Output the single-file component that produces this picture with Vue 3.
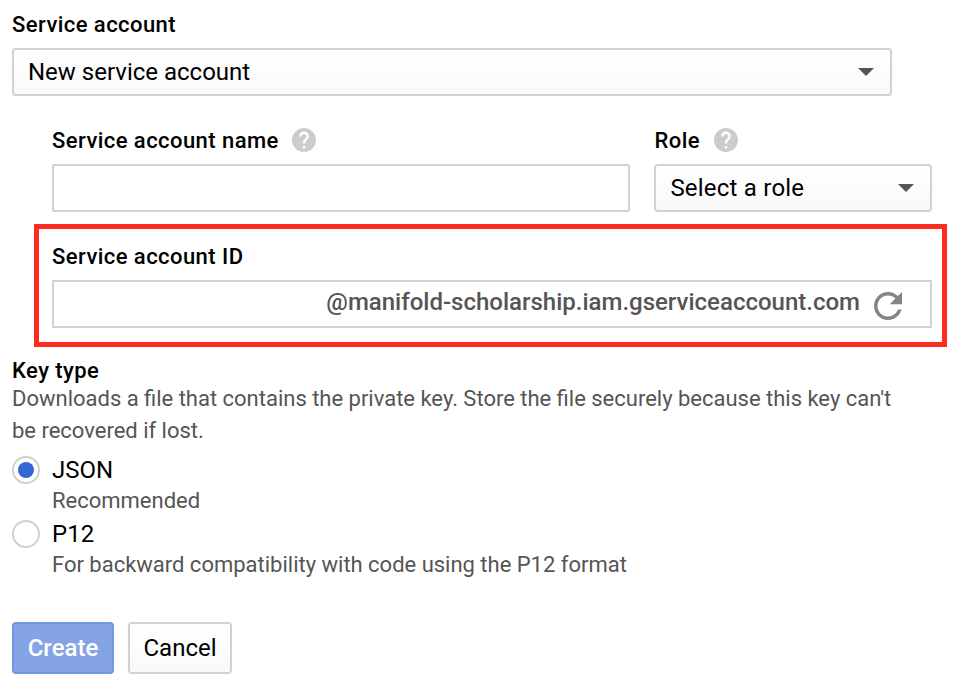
<script setup>
import { ref } from 'vue'

const keyType = ref('json')
const keyTypes = [
  { id: 'json', label: 'JSON', note: 'Recommended' },
  { id: 'p12', label: 'P12', note: 'For backward compatibility with code using the P12 format' },
]
</script>

<template>
  <form class="form" @submit.prevent>
    <div class="label"><span>Service account</span></div>
    <button type="button" class="select account">
      <span class="select-text">New service account</span>
      <svg class="caret" width="16" height="8" viewBox="0 0 16 8"><path d="M0 0h16L8 8z" fill="#555" /></svg>
    </button>

    <div class="row">
      <div class="field name">
        <div class="label">
          <span class="name-label">Service account name</span>
          <svg class="help" width="24" height="24" viewBox="2 2 20 20"><path fill="#ccc" d="M12 2C6.48 2 2 6.48 2 12s4.48 10 10 10 10-4.48 10-10S17.52 2 12 2zm1 17h-2v-2h2v2zm2.07-7.75l-.9.92C13.45 12.9 13 13.5 13 15h-2v-.5c0-1.1.45-2.1 1.17-2.83l1.24-1.26c.37-.36.59-.86.59-1.41 0-1.1-.9-2-2-2s-2 .9-2 2H8c0-2.21 1.79-4 4-4s4 1.790 4 4c0 .88-.36 1.680-.93 2.250z" /></svg>
        </div>
        <input class="input" type="text" />
      </div>
      <div class="field role">
        <div class="label">
          <span class="role-label">Role</span>
          <svg class="help" width="24" height="24" viewBox="2 2 20 20"><path fill="#ccc" d="M12 2C6.48 2 2 6.48 2 12s4.48 10 10 10 10-4.48 10-10S17.52 2 12 2zm1 17h-2v-2h2v2zm2.07-7.75l-.9.92C13.45 12.9 13 13.5 13 15h-2v-.5c0-1.1.45-2.1 1.17-2.83l1.24-1.26c.37-.36.59-.86.59-1.41 0-1.1-.9-2-2-2s-2 .9-2 2H8c0-2.21 1.79-4 4-4s4 1.790 4 4c0 .88-.36 1.680-.93 2.250z" /></svg>
        </div>
        <button type="button" class="select">
          <span class="select-text role-text">Select a role</span>
          <svg class="caret" width="16" height="8" viewBox="0 0 16 8"><path d="M0 0h16L8 8z" fill="#555" /></svg>
        </button>
      </div>
    </div>

    <div class="highlight">
      <div class="label"><span>Service account ID</span></div>
      <div class="id-box">
        <span class="domain">@manifold-scholarship.iam.gserviceaccount.com</span>
        <svg class="refresh" width="28" height="28" viewBox="4 4 16 16"><path fill="#848484" d="M17.650 6.350C16.200 4.900 14.210 4 12 4c-4.420 0-7.990 3.580-7.990 8s3.570 8 7.990 8c3.730 0 6.840-2.550 7.730-6h-2.080c-.82 2.330-3.040 4-5.650 4-3.310 0-6-2.690-6-6s2.690-6 6-6c1.660 0 3.140.69 4.220 1.780L13 11h7V4l-2.350 2.350z" /></svg>
      </div>
    </div>

    <div class="label key-label">Key type</div>
    <div class="desc">
      <div class="line1">Downloads a file that contains the private key. Store the file securely because this key can't</div>
      <div class="line2">be recovered if lost.</div>
    </div>

    <div v-for="k in keyTypes" :key="k.id" class="option" @click="keyType = k.id">
      <span class="radio"><span v-if="keyType === k.id" class="dot"></span></span>
      <div class="option-body">
        <div class="option-label">{{ k.label }}</div>
        <div class="note">{{ k.note }}</div>
      </div>
    </div>

    <div class="actions">
      <button type="submit" class="btn primary">Create</button>
      <button type="button" class="btn cancel">Cancel</button>
    </div>
  </form>
</template>

<style>
body { background: #fff; }
</style>

<style scoped>
.form, .form * { box-sizing: border-box; }
.form {
  width: 954px;
  height: 699px;
  padding: 0 0 0 12px;
  font-family: Roboto, sans-serif;
  color: #000;
  white-space: nowrap;
}
button, input { font-family: inherit; margin: 0; outline: none; }
.label {
  display: flex;
  align-items: center;
  height: 48px;
  font-size: 22px;
  font-weight: 500;
  line-height: 36px;
  letter-spacing: 0.44px;
}
.label span { padding-top: 2px; }
.select {
  display: flex;
  align-items: center;
  justify-content: space-between;
  width: 100%;
  height: 48px;
  padding: 0 16px 0 14px;
  border: 2px solid #d1d1d1;
  border-radius: 4px;
  background: linear-gradient(#fff, #f9f9f9);
  font-size: 24px;
  color: #000;
}
.account { width: 880px; }
.role-label { padding-left: 0.5px; }
.role-text { padding-left: 0.4px; letter-spacing: 0.22px; }
.row { display: flex; gap: 24px; padding: 20px 0 0 40px; }
.name { width: 578px; }
.role { width: 278px; }
.help { margin-left: 13px; }
.role .help { margin-left: 14px; }
.input {
  display: block;
  width: 100%;
  height: 48px;
  border: 2px solid #d1d1d1;
  border-radius: 2px;
  background: #fff;
}
.highlight {
  width: 913px;
  height: 123px;
  margin: 12px 0 0 22px;
  padding: 3px 10px 0 13px;
  border: 5px solid #ff2a1e;
}
.id-box {
  display: flex;
  align-items: center;
  justify-content: flex-end;
  width: 880px;
  height: 48px;
  padding-right: 28px;
  border: 2px solid #d1d1d1;
  font-size: 24px;
  font-weight: 500;
  color: #555;
}
.domain { padding-bottom: 4px; }
.refresh { margin: 4px 0 0 14px; }
.key-label { height: 36px; line-height: 36px; padding-top: 11px; }
.desc { font-size: 22px; line-height: 32px; word-spacing: -0.06px; color: #555; }
.option { display: flex; height: 64px; }
.radio {
  display: flex;
  align-items: center;
  justify-content: center;
  width: 28px;
  height: 28px;
  margin: 9px 12px 0 0;
  border: 2px solid #d1d1d1;
  border-radius: 50%;
}
.dot { width: 16px; height: 16px; border-radius: 50%; background: #3367d6; }
.option-label { height: 38px; padding-top: 8px; font-size: 24px; line-height: 30px; }
.note { font-size: 22px; line-height: 32px; word-spacing: -0.06px; color: #555; }
.actions { display: flex; gap: 14px; margin-top: 47px; }
.btn {
  display: flex;
  align-items: center;
  justify-content: center;
  height: 52px;
  padding: 0;
  border: 2px solid #d1d1d1;
  border-radius: 4px;
  font-size: 24px;
}
.primary { width: 102px; border-color: #7098e0; background: #85a4e6; color: #fff; font-weight: 500; }
.cancel { width: 104px; background: linear-gradient(#fff, #f9f9f9); color: #000; }
</style>
